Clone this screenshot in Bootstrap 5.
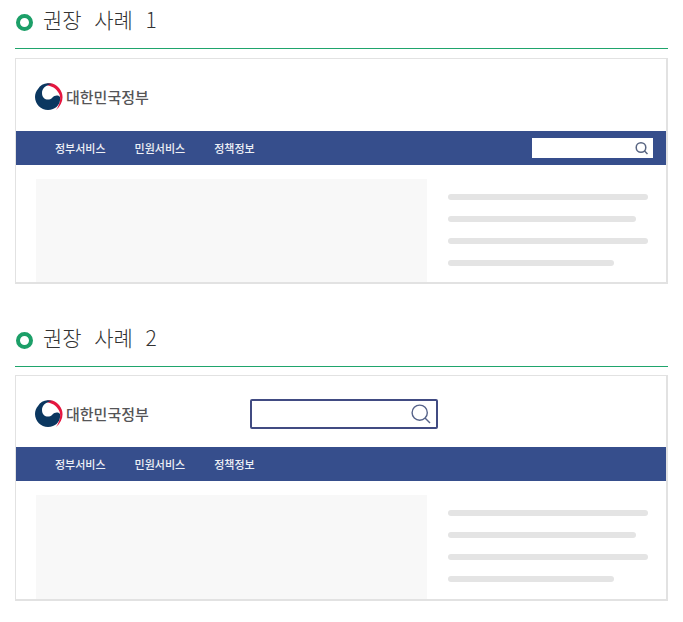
<!DOCTYPE html>
<html lang="ko">
<head>
<meta charset="utf-8">
<meta name="viewport" content="width=device-width, initial-scale=1">
<title>권장 사례</title>
<link rel="stylesheet" href="https://cdn.jsdelivr.net/npm/bootstrap@5.3.0/dist/css/bootstrap.min.css">
<style>
  body { font-family: "Noto Sans CJK KR", sans-serif; background: #fff; color: #444; }
  .page { padding: 0 15px; }
  .example + .example { margin-top: 34px; }
  .example-head { height: 49px; padding-bottom: 6px; border-bottom: 1px solid #1fa56c; }
  /* wide word gaps come from the monospaced space */
  .example-title { font: 300 21px/32px "Liberation Mono", "Noto Sans CJK KR", monospace; color: #333; }
  .example-title span { font-family: "Noto Sans CJK KR", sans-serif; }
  .ring { width: 17px; height: 17px; border: 4px solid #1c9f68; margin: 3px 10px 0 1px; }
  .frame { margin-top: 9px; border: 1px solid #e2e2e2; border-right-width: 2px; border-bottom-width: 2px; }
  .frame-compact { margin-top: 8px; }
  .brand-bar { height: 72px; padding: 4px 20px 0 19px; }
  .frame-compact .brand-bar { height: 71px; }
  .brand { font-size: 15px; line-height: 20px; font-weight: 500; color: #555557; }
  .brand svg { width: 28px; height: 28px; margin-right: 3px; }
  .menu { height: 34px; background: #364e8c; padding: 0 13px 0 39px; }
  .menu .nav { gap: 29px; }
  .menu .nav-link { font-size: 11px; line-height: 16px; font-weight: 500; color: #eef0f6; padding: 0; }
  .search input, .search input:focus { border: 0; border-radius: 0; background: transparent; box-shadow: none; padding: 0 6px; min-height: 0; font-size: 12px; min-width: 0; }
  .search button { border: 0; background: transparent; padding: 0; }
  .search-small { width: 121px; height: 20px; background: #fff; padding-right: 4px; }
  .search-large { width: 188px; height: 30px; border: 2px solid #414b82; border-radius: 2px; padding-right: 5px; margin-left: 101px; }
  .content { padding: 14px 18px 0 20px; gap: 21px; }
  .visual { flex: 392 1 0; height: 103px; background: #f8f8f8; }
  .frame-compact .visual { height: 104px; }
  .lines { flex: 200 1 0; padding-top: 15px; gap: 16px; }
  .lines div { height: 6px; background: #e4e4e4; }
  .line-mid { width: 94%; }
  .line-short { width: 83%; }
</style>
</head>
<body>
<svg class="d-none" aria-hidden="true">
  <symbol id="emblem" viewBox="0 0 28 28">
    <path fill="#e5163f" d="M9 2C14-1 20 0 24 5c6 7 4 16-3 22 4-6 6-13 2-18C20 4 14 2 9 2Z"/>
    <path fill="#0b3760" d="M3 6C6 1 11-1 17 1 11 2 7 5 7 10c0 7 7 8 10 5 3-3 6-3 8-1 1 7-4 13-12 13C6 27 0 21 0 14c0-3 1-6 3-8Z"/>
  </symbol>
</svg>
<main class="page">
  <section class="example">
    <div class="example-head d-flex align-items-center">
      <span class="ring rounded-circle flex-shrink-0"></span>
      <h2 class="example-title m-0">권장 사례 <span>1</span></h2>
    </div>
    <div class="frame">
      <header class="brand-bar d-flex align-items-center">
        <a href="#" class="brand d-flex align-items-center text-decoration-none"><svg aria-hidden="true"><use href="#emblem"/></svg>대한민국정부</a>
      </header>
      <nav class="menu d-flex align-items-center justify-content-between" aria-label="주 메뉴 1">
        <ul class="nav">
          <li class="nav-item"><a class="nav-link" href="#">정부서비스</a></li>
          <li class="nav-item"><a class="nav-link" href="#">민원서비스</a></li>
          <li class="nav-item"><a class="nav-link" href="#">정책정보</a></li>
        </ul>
        <form class="search search-small d-flex align-items-center" role="search">
          <input class="form-control" type="search" aria-label="검색어">
          <button class="d-flex" type="button" aria-label="검색"><svg width="14" height="14" viewBox="0 0 14 14" fill="none" stroke="#586582" stroke-width="1.5"><circle cx="6" cy="6.5" r="4.8"/><path d="m9.3 9.8 3.2 3.2"/></svg></button>
        </form>
      </nav>
      <div class="content d-flex">
        <div class="visual"></div>
        <div class="lines d-flex flex-column">
          <div class="rounded-pill"></div>
          <div class="rounded-pill line-mid"></div>
          <div class="rounded-pill"></div>
          <div class="rounded-pill line-short"></div>
        </div>
      </div>
    </div>
  </section>

  <section class="example">
    <div class="example-head d-flex align-items-center">
      <span class="ring rounded-circle flex-shrink-0"></span>
      <h2 class="example-title m-0">권장 사례 <span>2</span></h2>
    </div>
    <div class="frame frame-compact">
      <header class="brand-bar d-flex align-items-center">
        <a href="#" class="brand d-flex align-items-center text-decoration-none"><svg aria-hidden="true"><use href="#emblem"/></svg>대한민국정부</a>
        <form class="search search-large d-flex align-items-center" role="search">
          <input class="form-control" type="search" aria-label="검색어">
          <button class="d-flex" type="button" aria-label="검색"><svg width="20" height="20" viewBox="0 0 20 20" fill="none" stroke="#56638a" stroke-width="1.4"><circle cx="8.7" cy="8.7" r="7.6"/><path d="m14 14 5 5"/></svg></button>
        </form>
      </header>
      <nav class="menu d-flex align-items-center" aria-label="주 메뉴 2">
        <ul class="nav">
          <li class="nav-item"><a class="nav-link" href="#">정부서비스</a></li>
          <li class="nav-item"><a class="nav-link" href="#">민원서비스</a></li>
          <li class="nav-item"><a class="nav-link" href="#">정책정보</a></li>
        </ul>
      </nav>
      <div class="content d-flex">
        <div class="visual"></div>
        <div class="lines d-flex flex-column">
          <div class="rounded-pill"></div>
          <div class="rounded-pill line-mid"></div>
          <div class="rounded-pill"></div>
          <div class="rounded-pill line-short"></div>
        </div>
      </div>
    </div>
  </section>
</main>
<script src="https://cdn.jsdelivr.net/npm/bootstrap@5.3.0/dist/js/bootstrap.bundle.min.js"></script>
</body>
</html>
